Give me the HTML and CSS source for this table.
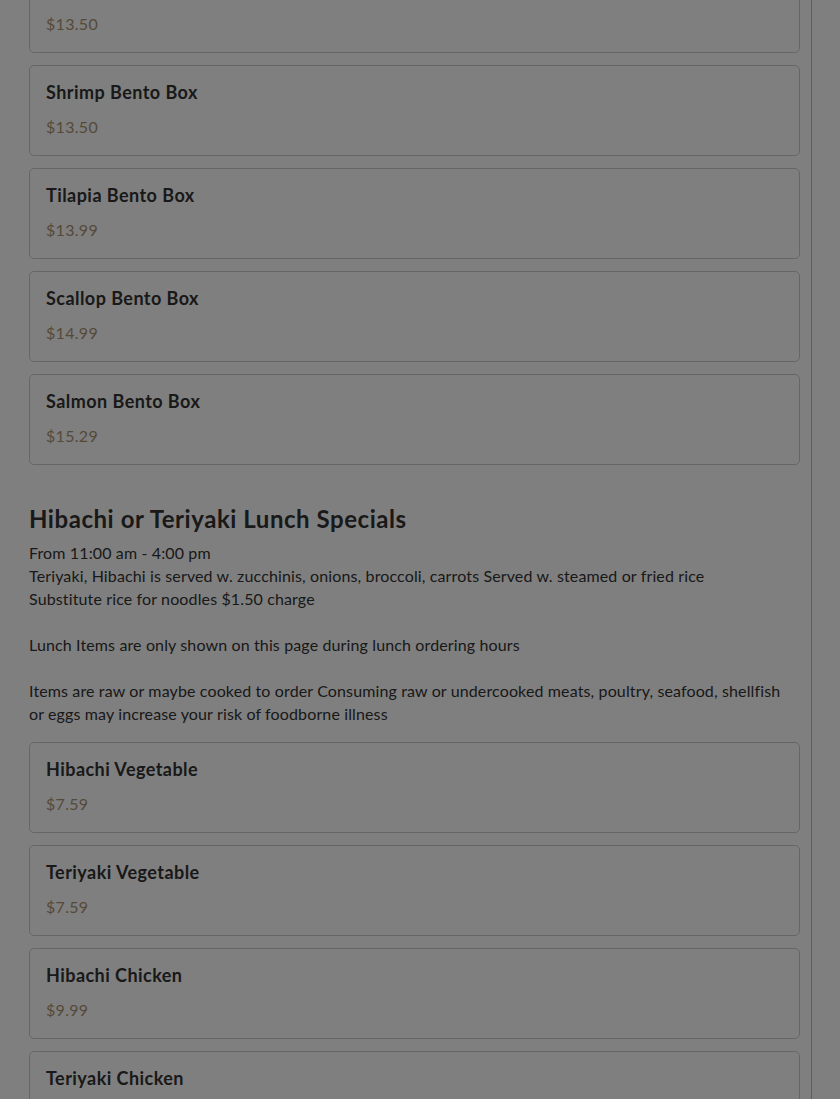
FILE: index.html
```html
<!DOCTYPE html>
<html lang="en">
<head>
    <meta charset="UTF-8">
    <meta name="viewport" content="width=device-width, initial-scale=1.0">
    <title>Lunch Menu</title>
    <link rel="stylesheet" href="styles.css">
</head>
<body>
    <div class="menu">
        <div class="item-list first-list">
            <div class="item">
                <div class="item-name">Chicken Bento Box</div>
                <div class="item-price">$13.50</div>
            </div>
            <div class="item">
                <div class="item-name">Shrimp Bento Box</div>
                <div class="item-price">$13.50</div>
            </div>
            <div class="item">
                <div class="item-name">Tilapia Bento Box</div>
                <div class="item-price">$13.99</div>
            </div>
            <div class="item">
                <div class="item-name">Scallop Bento Box</div>
                <div class="item-price">$14.99</div>
            </div>
            <div class="item">
                <div class="item-name">Salmon Bento Box</div>
                <div class="item-price">$15.29</div>
            </div>
        </div>

        <div class="section">
            <h2>Hibachi or Teriyaki Lunch Specials</h2>
            <p class="section-desc">
                From 11:00 am - 4:00 pm<br>
                Teriyaki, Hibachi is served w. zucchinis, onions, broccoli, carrots Served w. steamed or fried rice<br>
                Substitute rice for noodles $1.50 charge<br>
                <br>
                Lunch Items are only shown on this page during lunch ordering hours<br>
                <br>
                Items are raw or maybe cooked to order Consuming raw or undercooked meats, poultry, seafood, shellfish<br>
                or eggs may increase your risk of foodborne illness
            </p>
            <div class="item-list">
                <div class="item">
                    <div class="item-name">Hibachi Vegetable</div>
                    <div class="item-price">$7.59</div>
                </div>
                <div class="item">
                    <div class="item-name">Teriyaki Vegetable</div>
                    <div class="item-price">$7.59</div>
                </div>
                <div class="item">
                    <div class="item-name">Hibachi Chicken</div>
                    <div class="item-price">$9.99</div>
                </div>
                <div class="item">
                    <div class="item-name">Teriyaki Chicken</div>
                    <div class="item-price">$9.99</div>
                </div>
            </div>
        </div>
    </div>

    <!-- page is dimmed behind a dialog -->
    <div class="overlay"></div>
</body>
</html>
```

FILE: styles.css
```css
* {
    margin: 0;
    padding: 0;
    box-sizing: border-box;
    font-family: 'Lato', 'Open Sans', sans-serif;
}

body {
    background: #fff;
    color: #333;
    overflow: hidden;
}

.menu {
    width: 812px;
    padding: 0 11px 0 29px;
    border-right: 1px solid #bcbcbc;
    min-height: 100vh;
}

.item-list {
    display: flex;
    flex-direction: column;
    gap: 12px;
}

.first-list {
    margin-top: -38px;
}

.item {
    border: 1px solid #cdcdcd;
    border-radius: 5px;
    padding: 15px 16px 16px;
    height: 91px;
}

.item-name {
    font-size: 18px;
    font-weight: bold;
    line-height: 22px;
    letter-spacing: 0.45px;
    color: #333;
}

.item-price {
    margin-top: 12px;
    font-size: 16px;
    line-height: 23px;
    letter-spacing: 0.3px;
    color: #ab9473;
}

.section {
    margin-top: 39px;
}

h2 {
    font-size: 24px;
    font-weight: bold;
    line-height: 29px;
    letter-spacing: 0.55px;
    color: #333;
}

.section-desc {
    margin-top: 8px;
    margin-bottom: 17px;
    font-size: 16px;
    line-height: 23px;
    letter-spacing: 0.13px;
}

.overlay {
    position: fixed;
    top: 0;
    left: 0;
    right: 0;
    bottom: 0;
    background: rgba(0, 0, 0, 0.5);
}
```
